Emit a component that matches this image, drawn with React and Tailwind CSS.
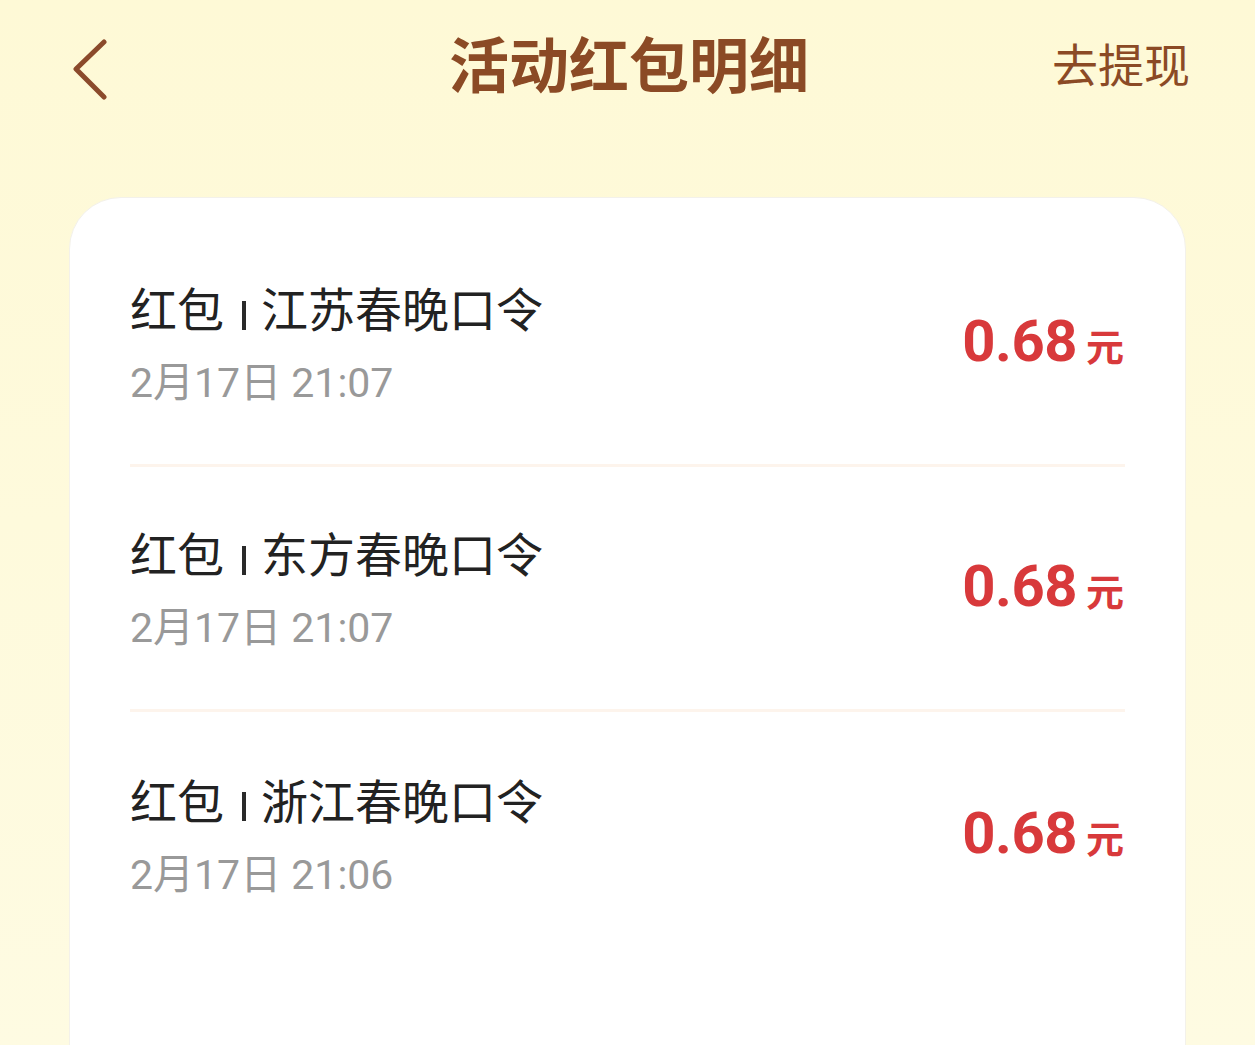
import React from "react";

const RECORDS = [
  { id: 1, title: "江苏春晚口令", time: "2月17日 21:07", amount: "0.68" },
  { id: 2, title: "东方春晚口令", time: "2月17日 21:07", amount: "0.68" },
  { id: 3, title: "浙江春晚口令", time: "2月17日 21:06", amount: "0.68" },
];

const FONT = { fontFamily: 'Roboto, "Noto Sans CJK SC", sans-serif' };

const BackIcon = () => (
  <svg width="40" height="64" viewBox="0 0 40 64" fill="none">
    <path
      d="M34 3 L6 30 L34 58"
      stroke="#8b4a2b"
      strokeWidth="5"
      strokeLinecap="round"
      strokeLinejoin="round"
    />
  </svg>
);

const RecordRow = ({ record, last }) => (
  <div
    className={`flex items-center justify-between h-[245px] ${
      last ? "" : "border-b-[3px] border-[#fdf4ec]"
    }`}
  >
    <div className="flex flex-col mt-[4px]">
      <div className="flex items-center text-[47px] leading-[56px] text-[#222222]">
        <span>红包</span>
        <span
          aria-label="|"
          className="inline-block shrink-0 w-[4px] h-[29px] bg-[#2a2a2a] ml-[18px] mr-[15px] mt-[8px]"
        />
        <span>{record.title}</span>
      </div>
      <div className="mt-[20px] text-[41px] leading-[48px] text-[#999999]">
        {record.time}
      </div>
    </div>
    <div className="flex items-baseline text-[#d8393b] mt-[-4px] mr-[1px]">
      <span className="text-[58px] font-bold leading-none tracking-[-0.5px]">
        {record.amount}
      </span>
      <span className="ml-[9px] text-[38px] font-bold leading-none">元</span>
    </div>
  </div>
);

const App = () => {
  return (
    <div
      className="h-[1045px] overflow-hidden bg-gradient-to-b from-[#fef9d6] to-[#fefbe2]"
      style={FONT}
    >
      <div className="grid grid-cols-[1fr_auto_1fr] items-center h-[136px] pl-[68px] pr-[65px]">
        <div className="flex items-center pt-[6px] pl-[2px]">
          <BackIcon />
        </div>
        <h1 className="text-[60px] font-bold text-[#8b4a25] leading-none">
          活动红包明细
        </h1>
        <div className="flex justify-end">
          <span className="text-[46px] text-[#8b4a25] leading-none mt-[-4px]">
            去提现
          </span>
        </div>
      </div>

      <div className="mx-[69px] mt-[61px] h-[900px] rounded-t-[52px] bg-white border border-[#f3f1ea] px-[60px] pt-[24px]">
        {RECORDS.map((record, i) => (
          <RecordRow
            key={record.id}
            record={record}
            last={i === RECORDS.length - 1}
          />
        ))}
      </div>
    </div>
  );
};

export default App;
